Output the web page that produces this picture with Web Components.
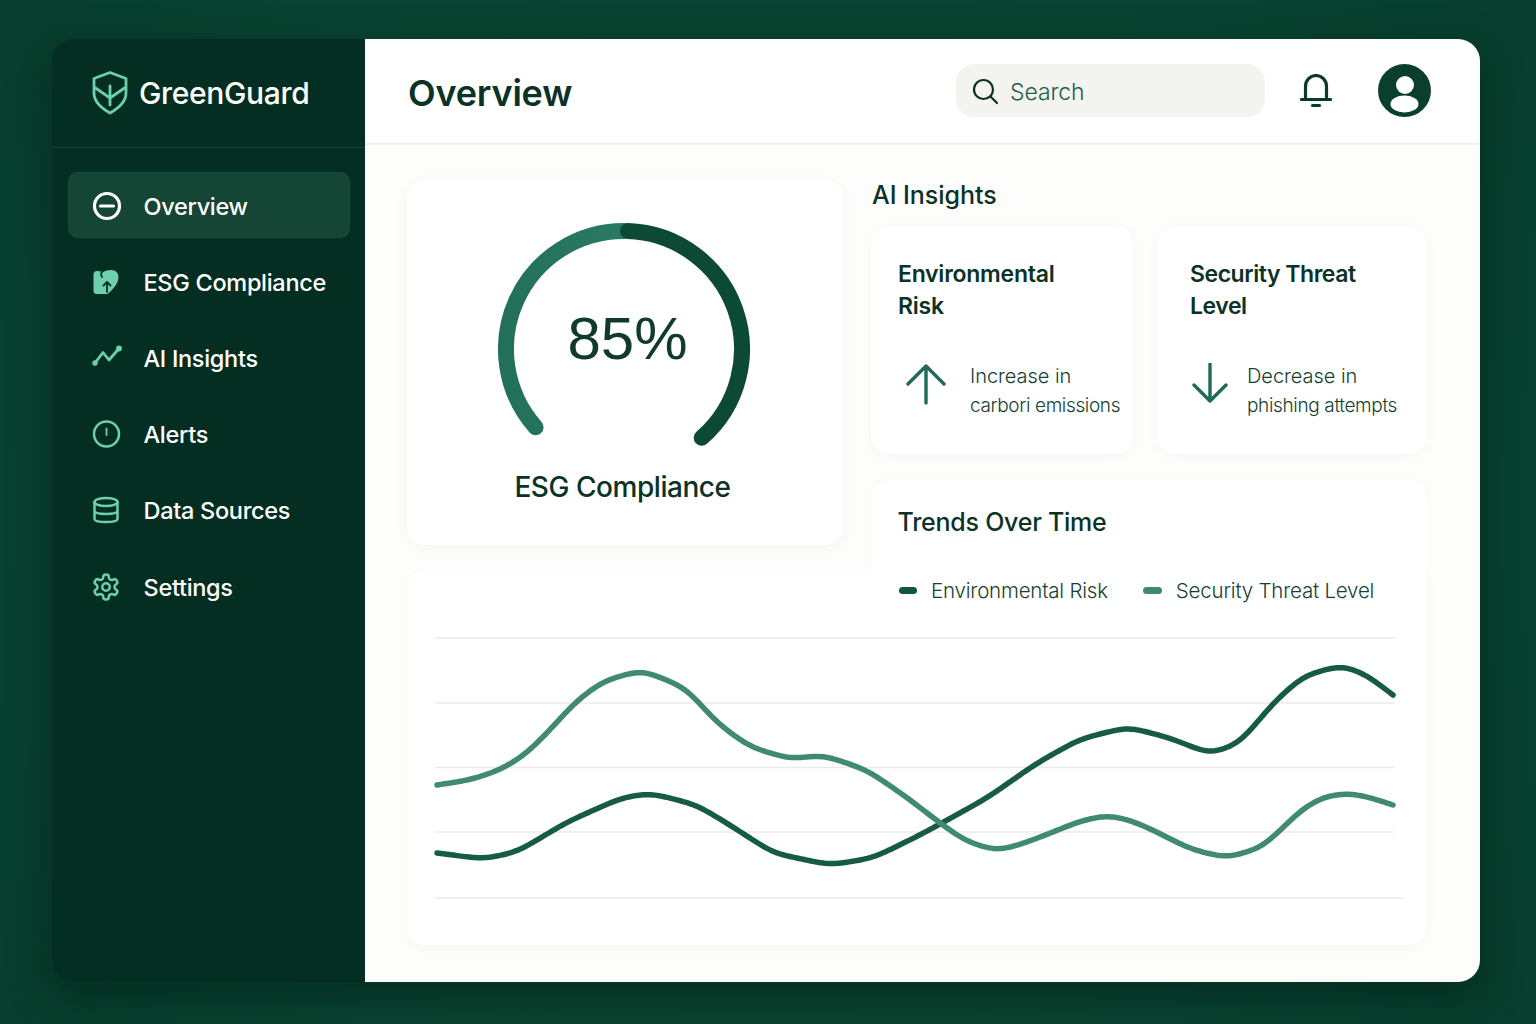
<!DOCTYPE html>
<html lang="en">
<head>
<meta charset="utf-8">
<title>GreenGuard</title>
<style>
html,body{margin:0;height:100%}
body{width:1536px;height:1024px;overflow:hidden;box-sizing:border-box;padding:39px 56px 42px 52px;
background:radial-gradient(circle at 50% 50%,#09482f 0%,#084331 70%,#073d2c 100%);
font-family:Inter,"Liberation Sans",sans-serif}
</style>
</head>
<body>
<gg-app>
  <gg-sidebar slot="side">
    <gg-nav-item icon="overview" active>Overview</gg-nav-item>
    <gg-nav-item icon="esg">ESG Compliance</gg-nav-item>
    <gg-nav-item icon="ai">AI Insights</gg-nav-item>
    <gg-nav-item icon="alert">Alerts</gg-nav-item>
    <gg-nav-item icon="data">Data Sources</gg-nav-item>
    <gg-nav-item icon="gear" style="margin-top:1px">Settings</gg-nav-item>
  </gg-sidebar>
  <gg-header slot="head">Overview</gg-header>
  <gg-dashboard slot="main">
    <gg-gauge slot="gauge" value="85%">ESG Compliance</gg-gauge>
    <gg-insights slot="insights" heading="AI Insights">
      <gg-insight dir="up" heading="Environmental Risk" line1="Increase in" line2="carbori emissions"></gg-insight>
      <gg-insight dir="down" heading="Security Threat Level" line1="Decrease in" line2="phishing attempts"></gg-insight>
    </gg-insights>
    <gg-trends-head slot="thead">Trends Over Time</gg-trends-head>
    <gg-trends slot="chart"></gg-trends>
  </gg-dashboard>
</gg-app>
<script>
function def(name, css, html, setup){
  customElements.define(name, class extends HTMLElement{
    connectedCallback(){
      if(this.shadowRoot) return;
      const r=this.attachShadow({mode:'open'});
      r.innerHTML='<style>'+css+'</style>'+(typeof html==='function'?html(this):html);
      if(setup) setup(r,this);
    }
  });
}
def('gg-app',`:host{display:grid;grid-template-columns:313px 1fr;grid-template-rows:106px 1fr;width:1428px;height:943px;border-radius:22px;overflow:hidden;box-shadow:0 14px 44px rgba(0,20,14,.45)}
 ::slotted([slot=side]){grid-row:1/3}`,
 `<slot name="side"></slot><slot name="head"></slot><slot name="main"></slot>`);

def('gg-sidebar',`:host{display:block;background:#052e22;color:#fff}
 .brand{display:flex;align-items:center;gap:11px;height:109px;padding:0 0 0 40px;box-sizing:border-box;border-bottom:1px solid #104233;font-size:30px;font-weight:500;letter-spacing:-.35px}
 svg{display:block;flex:none}
 nav{display:flex;flex-direction:column;gap:10px;padding:24px 15px 0 16px}`,
 `<div class="brand"><svg width="36" height="44" viewBox="0 0 36 44" fill="none" stroke="#6ccfae" stroke-width="2.8" stroke-linejoin="round" stroke-linecap="round"><path d="M18 1.5L34 7.5V22C34 31 27 37 18 42C9 37 2 31 2 22V7.5Z"/><path d="M18 15V34M3.500 17L18 27M32.500 17L18 27"/></svg><span>GreenGuard</span></div><nav><slot></slot></nav>`);

const navIcons={
 overview:`<svg width="30" height="30" viewBox="0 0 30 30" fill="none" stroke="#fff" stroke-width="3.2" stroke-linecap="round"><circle cx="15" cy="15" r="12.5"/><path d="M8.5 15H21.5"/></svg>`,
 esg:`<svg width="30" height="30" viewBox="0 0 30 30"><path fill="#6ccfae" d="M1.500 7.500Q1.500 4 5 4L8 4.200Q9.500 4.200 10.500 5.800Q14 2.500 20 3Q26.500 3.700 26.500 10.500Q26.500 18 15.500 27H5Q1.500 27 1.500 24Z"/><path fill="none" stroke="#052e22" stroke-width="1.800" stroke-linecap="round" stroke-linejoin="round" d="M15 25V15.500M11.500 18.500L15 15L18.500 18.500M9.500 5.500Q8.500 8 10 10"/></svg>`,
 ai:`<svg width="30" height="30" viewBox="0 0 30 30" fill="none" stroke="#6ccfae" stroke-width="2.800" stroke-linecap="round" stroke-linejoin="round"><path d="M3 20L11 9.500L17 17L27 5.500"/><circle cx="3" cy="20" r="1.300" fill="#6ccfae"/><circle cx="27" cy="5.500" r="1.500" fill="#6ccfae"/></svg>`,
 alert:`<svg width="30" height="30" viewBox="0 0 30 30" fill="none" stroke="#6ccfae" stroke-width="2.500" stroke-linecap="round"><circle cx="14.500" cy="15" r="12.500"/><path d="M14.500 9.500V16" stroke-width="1.800"/></svg>`,
 data:`<svg width="30" height="30" viewBox="0 0 30 30" fill="none" stroke="#6ccfae" stroke-width="2.500" stroke-linecap="round" stroke-linejoin="round"><ellipse cx="14" cy="7" rx="11.500" ry="4"/><path d="M2.500 7V24Q2.500 27 14 27T25.500 24V7M2.500 15.500Q2.500 19 14 19T25.500 15.500"/></svg>`,
 gear:`<svg width="30" height="30" viewBox="0 0 24 24" fill="none" stroke="#6ccfae" stroke-width="2" stroke-linecap="round" stroke-linejoin="round" style="margin-left:-1px"><path d="M12.220 2h-.440a2 2 0 0 0-2 2v.180a2 2 0 0 1-1 1.730l-.430.250a2 2 0 0 1-2 0l-.150-.080a2 2 0 0 0-2.730.730l-.220.380a2 2 0 0 0 .730 2.730l.150.100a2 2 0 0 1 1 1.720v.510a2 2 0 0 1-1 1.740l-.150.090a2 2 0 0 0-.730 2.730l.220.380a2 2 0 0 0 2.730.730l.150-.080a2 2 0 0 1 2 0l.430.250a2 2 0 0 1 1 1.730V20a2 2 0 0 0 2 2h.440a2 2 0 0 0 2-2v-.180a2 2 0 0 1 1-1.730l.430-.250a2 2 0 0 1 2 0l.150.080a2 2 0 0 0 2.730-.730l.220-.390a2 2 0 0 0-.730-2.730l-.150-.080a2 2 0 0 1-1-1.740v-.500a2 2 0 0 1 1-1.740l.150-.090a2 2 0 0 0 .730-2.730l-.220-.380a2 2 0 0 0-2.730-.730l-.150.080a2 2 0 0 1-2 0l-.430-.250a2 2 0 0 1-1-1.730V4a2 2 0 0 0-2-2z"/><circle cx="12" cy="12" r="3"/></svg>`
};
def('gg-nav-item',`:host{display:flex;align-items:center;gap:21.5px;height:66px;padding:2px 0 0 24px;box-sizing:border-box;border-radius:10px;color:#fff;font-size:23.5px;font-weight:500;letter-spacing:-.3px}
 :host([active]){background:#154535;box-shadow:inset 0 0 0 1px #184a39}
 svg{display:block}.i{width:30px;height:30px;flex:none}`,
 h=>`<span class="i">${navIcons[h.getAttribute('icon')]}</span><slot></slot>`);

def('gg-header',`:host{display:flex;align-items:center;height:106px;box-sizing:border-box;padding:0 49px 1px 43px;background:#fff;border-bottom:2px solid #eeefeb;color:#0b3226}
 h1{margin:0;padding-top:5px;font-size:36px;font-weight:600;letter-spacing:-.2px;flex:1}
 .search{display:flex;align-items:center;gap:11px;width:309px;height:53px;box-sizing:border-box;padding-left:15px;border-radius:18px;background:#f3f4f0;font-size:23px;font-weight:300;color:#1f5c48;letter-spacing:-.1px}
 .search span{padding-top:2px}
 .bell{margin:0 46px 0 35px}svg{display:block;flex:none}`,
 h=>`<h1><slot></slot></h1>
 <div class="search"><svg width="28" height="28" viewBox="0 0 28 28" fill="none" stroke="#0c2e24" stroke-width="2.200" stroke-linecap="round"><circle cx="12.500" cy="12.500" r="9.500"/><path d="M19.500 19.500L26 26"/></svg><span>Search</span></div>
 <svg class="bell" width="32" height="34" viewBox="0 0 32 34" fill="none" stroke="#0a3a2c" stroke-width="3.200" stroke-linecap="round"><path d="M5.500 25V12.500a10.500 11 0 0 1 21 0V25"/><path d="M1.500 25.500H30.500"/><path d="M12.500 31.500H19.500"/></svg>
 <svg width="53" height="53" viewBox="0 0 53 53"><circle cx="26.500" cy="26.500" r="26.500" fill="#0a3f2e"/><circle cx="27" cy="21" r="9" fill="#fff"/><ellipse cx="26.500" cy="40" rx="14" ry="8.500" fill="#fff"/></svg>`);

def('gg-dashboard',`:host{display:grid;grid-template-columns:436px 28px 556px;grid-template-rows:274px 26px 90px 375px;align-content:start;padding:35px 0 0 42px;box-sizing:border-box;background:#fdfdfb}
 ::slotted([slot=gauge]){grid-column:1;grid-row:1/4;height:365px}
 ::slotted([slot=insights]){grid-column:3;grid-row:1}
 ::slotted([slot=thead]){grid-column:3;grid-row:3}
 ::slotted([slot=chart]){grid-column:1/4;grid-row:4}`,
 `<slot name="gauge"></slot><slot name="insights"></slot><slot name="thead"></slot><slot name="chart"></slot>`);

def('gg-gauge',`:host{display:block;background:#fff;border-radius:18px;box-shadow:0 2px 14px rgba(20,50,40,.045);color:#0b3226}
 .dial{display:grid;justify-items:center;padding-top:36px}
 .dial>*{grid-area:1/1}
 svg{display:block}
 .v{font-family:"Liberation Sans",sans-serif;font-size:60px;font-weight:400;line-height:72px;margin-top:87px;margin-left:5px;color:#0f3a2c}
 .l{text-align:center;font-size:28px;font-weight:500;line-height:36px;margin-top:23px;letter-spacing:-.45px;padding-right:5px}`,
 h=>`<div class="dial"><svg width="436" height="230" viewBox="0 0 436 230" fill="none" stroke-width="16" stroke-linecap="round"><defs><linearGradient id="a" x1="0" y1="0" x2="1" y2="0"><stop offset="0" stop-color="#22705a"/><stop offset="1" stop-color="#2b7a63"/></linearGradient></defs><path d="M128.600 211.200A118 118 0 0 1 217 15" stroke="url(#a)"/><path d="M221 15.070A118 118 0 0 1 294.700 221.800" stroke="#0c4a36"/></svg><div class="v">${h.getAttribute('value')}</div></div><div class="l"><slot></slot></div>`);

def('gg-insights',`:host{display:block;color:#0b3226}
 h2{margin:0 0 16px 1px;font-size:25px;line-height:30px;font-weight:500;letter-spacing:-.05px}
 .g{display:grid;grid-template-columns:262px 270px;gap:24px}`,
 h=>`<h2>${h.getAttribute('heading')}</h2><div class="g"><slot></slot></div>`);

def('gg-insight',`:host{display:block;height:228px;box-sizing:border-box;padding:32px 10px 0 27px;background:#fff;border-radius:18px;box-shadow:0 2px 12px rgba(20,50,40,.04);color:#0b3226}
 :host([dir=down]){padding-left:33px}
 h3{margin:0 0 39px;font-size:23px;line-height:32px;font-weight:600;letter-spacing:-.25px;max-width:190px}
 :host([dir=down]) h3{letter-spacing:-.45px}
 .r{display:flex;align-items:center;gap:24px}
 :host([dir=down]) .r{gap:19px}
 svg{display:block;flex:none;margin-top:-15px}
 p{margin:0;font-weight:300;line-height:30px;white-space:nowrap;color:#143f31;font-size:19px;letter-spacing:-.35px}
 p span{display:block}.a{font-size:20px;letter-spacing:-.05px}`,
 h=>{const up=h.getAttribute('dir')==='up';return `<h3>${h.getAttribute('heading')}</h3><div class="r">${up?
 `<svg width="40" height="42" viewBox="0 0 40 42" fill="none" stroke="#1f6b55" stroke-width="3.400" stroke-linecap="round" stroke-linejoin="round" style="margin-left:8px"><path d="M20 40V3M2 21L20 3L38 21"/></svg>`:
 `<svg width="36" height="42" viewBox="0 0 36 42" fill="none" stroke="#1f6b55" stroke-width="3.400" stroke-linecap="round" stroke-linejoin="round" style="margin-left:2px"><path d="M18 1V38M2 22L18 38L34 22"/></svg>`}
 <p><span class="a">${h.getAttribute('line1')}</span><span>${h.getAttribute('line2')}</span></p></div>`});

def('gg-trends-head',`:host{display:block;background:#fff;border-radius:18px 18px 0 0;padding:27px 26.5px 0;box-sizing:border-box;color:#0b3226;font-size:25px;line-height:30px;font-weight:500;letter-spacing:-.25px;box-shadow:0 -1px 10px rgba(20,50,40,.025)}`,
 `<slot></slot>`);

/* Gaussian-smoothed line through the sampled knots */
const smooth=(p,sigma=10)=>{
  const x0=p[0][0],x1=p[p.length-1][0],n=Math.round(x1-x0)+1,y=[];
  let k=0;
  for(let i=0;i<n;i++){const x=x0+i;while(k<p.length-2&&p[k+1][0]<x)k++;
    const t=(x-p[k][0])/(p[k+1][0]-p[k][0]);y.push(p[k][1]+(p[k+1][1]-p[k][1])*t);}
  const R=Math.ceil(sigma*3),at=i=>i<0?2*y[0]-y[-i]:i>=n?2*y[n-1]-y[2*n-2-i]:y[i];
  let d='';
  for(let i=0;i<n;i+=2){let s=0,w=0;for(let j=-R;j<=R;j++){const g=Math.exp(-j*j/(2*sigma*sigma));s+=g*at(i+j);w+=g;}
    d+=(i?'L':'M')+(x0+i)+' '+(s/w).toFixed(2);}
  return d;
};
const light=[[437,785],[470,780],[500,770],[525,755],[550,730],[575,702],[603,681],[642,670],[686,688],[717,723],[750,747],[790,759],[823,755],[867,770],[905,796],[940,823],[965,841],[997,851],[1025,843],[1053,832],[1080,821],[1107,815],[1130,820],[1153,830],[1190,849],[1227,858],[1263,847],[1303,808],[1325,796],[1350,793],[1372,798],[1393,805]];
const dark=[[437,853],[483,859],[517,852],[567,822],[621,798],[650,793],[697,805],[733,827],[773,853],[830,865],[873,858],[920,835],[940,824],[987,798],[1037,763],[1080,739],[1128,727],[1170,738],[1210,754],[1240,743],[1273,703],[1303,676],[1342,665],[1367,675],[1393,695]];
def('gg-trends',`:host{display:block;height:375px;background:#fff;border-radius:18px 0 18px 18px;box-shadow:0 3px 12px rgba(20,50,40,.03);color:#0b3226;box-sizing:border-box;padding-top:8px}
 .lg{display:flex;align-items:center;height:24px;margin-bottom:1px;padding-left:492px;font-size:20.5px;font-weight:300;color:#143f31;white-space:nowrap;letter-spacing:-.2px}
 i{display:block;width:18px;height:7px;border-radius:4px;margin-right:14px}
 i.b{margin-left:35px;width:19px}
 svg{display:block}`,
 `<div class="lg"><i style="background:#14533e"></i><span>Environmental Risk</span><i class="b" style="background:#3d8a70"></i><span>Security Threat Level</span></div>
 <svg width="1020" height="342" viewBox="407 603 1020 342" fill="none">
  <g stroke="#ecece7" stroke-width="1.500"><path d="M435 638H1395M435 703H1395M435 767.500H1395M435 832H1395M435 898H1403"/></g>
  <path d="${smooth(dark)}" stroke="#165b45" stroke-width="5.500" stroke-linecap="round" stroke-linejoin="round"/>
  <path d="${smooth(light)}" stroke="#3f8a71" stroke-width="5.500" stroke-linecap="round" stroke-linejoin="round"/>
 </svg>`);
</script>
</body>
</html>
